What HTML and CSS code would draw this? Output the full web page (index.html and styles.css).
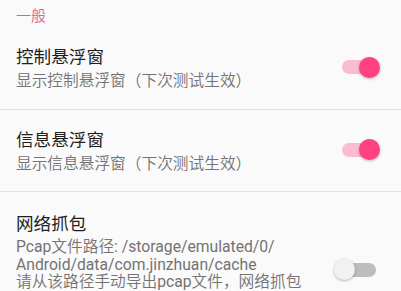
FILE: index.html
```html
<!DOCTYPE html>
<html lang="zh-CN">
<head>
<meta charset="utf-8">
<link rel="stylesheet" href="styles.css">
</head>
<body>
<div class="screen">
  <div class="category">一般</div>

  <div class="pref">
    <div class="pref-text">
      <div class="pref-title">控制悬浮窗</div>
      <div class="pref-summary">显示控制悬浮窗（下次测试生效）</div>
    </div>
    <div class="switch on"><span class="track"></span><span class="thumb"></span></div>
  </div>
  <div class="divider"></div>

  <div class="pref">
    <div class="pref-text">
      <div class="pref-title">信息悬浮窗</div>
      <div class="pref-summary">显示信息悬浮窗（下次测试生效）</div>
    </div>
    <div class="switch on"><span class="track"></span><span class="thumb"></span></div>
  </div>
  <div class="divider"></div>

  <div class="pref pref-tall">
    <div class="pref-text">
      <div class="pref-title">网络抓包</div>
      <div class="pref-summary"><span class="latin">Pcap</span>文件路径<span class="latin">: /storage/emulated/0/</span><br><span class="latin">Android/data/com.jinzhuan/cache</span><br>请从该路径手动导出<span class="latin">pcap</span>文件，网络抓包</div>
    </div>
    <div class="switch off"><span class="track"></span><span class="thumb"></span></div>
  </div>
</div>
</body>
</html>
```
FILE: styles.css
```css
html, body {
  margin: 0;
  padding: 0;
  background: #fafafa;
}
body {
  font-family: Roboto, "Noto Sans CJK SC", sans-serif;
  overflow: hidden;
}
.screen {
  width: 401px;
  height: 291px;
  overflow: hidden;
  background: #fafafa;
}
.category {
  height: 27px;
  box-sizing: border-box;
  padding: 6px 16px 1px;
  font-size: 15px;
  line-height: 20px;
  color: #e15b96;
  font-weight: 350;
}
.pref {
  display: flex;
  align-items: center;
  padding: 18px 19px 19px 16px;
}
.pref-tall {
  min-height: 154px;
  box-sizing: border-box;
  padding-top: 20px;
  align-items: center;
}
.pref-tall .pref-text {
  align-self: flex-start;
}
.pref-text {
  flex: 1;
  min-width: 0;
}
.pref-title {
  font-size: 17.6px;
  line-height: 24px;
  color: #1e1e1e;
  font-weight: 400;
}
.pref-summary {
  margin-top: 3px;
  font-size: 15.7px;
  line-height: 17.5px;
  color: #737373;
  white-space: nowrap;
  font-weight: 350;
}
.latin {
  font-size: 15.7px;
  font-weight: 400;
}
.pref-tall .pref-summary {
  margin-top: 2px;
}
.divider {
  height: 1px;
  background: #e2e2e2;
}
.switch {
  position: relative;
  width: 48px;
  height: 24px;
  flex: none;
}
.track {
  position: absolute;
  left: 8px;
  top: 5px;
  width: 34px;
  height: 14px;
  border-radius: 7px;
}
.thumb {
  position: absolute;
  top: 1.5px;
  width: 21px;
  height: 21px;
  border-radius: 50%;
  box-shadow: 0 1px 3px rgba(0, 0, 0, 0.28);
}
.on .track { background: #fbbcd3; }
.on .thumb { left: 25px; background: #ff4081; }
.off .track { background: #bdbdbd; }
.off .thumb { left: 0; background: #f1f1f1; }
```
